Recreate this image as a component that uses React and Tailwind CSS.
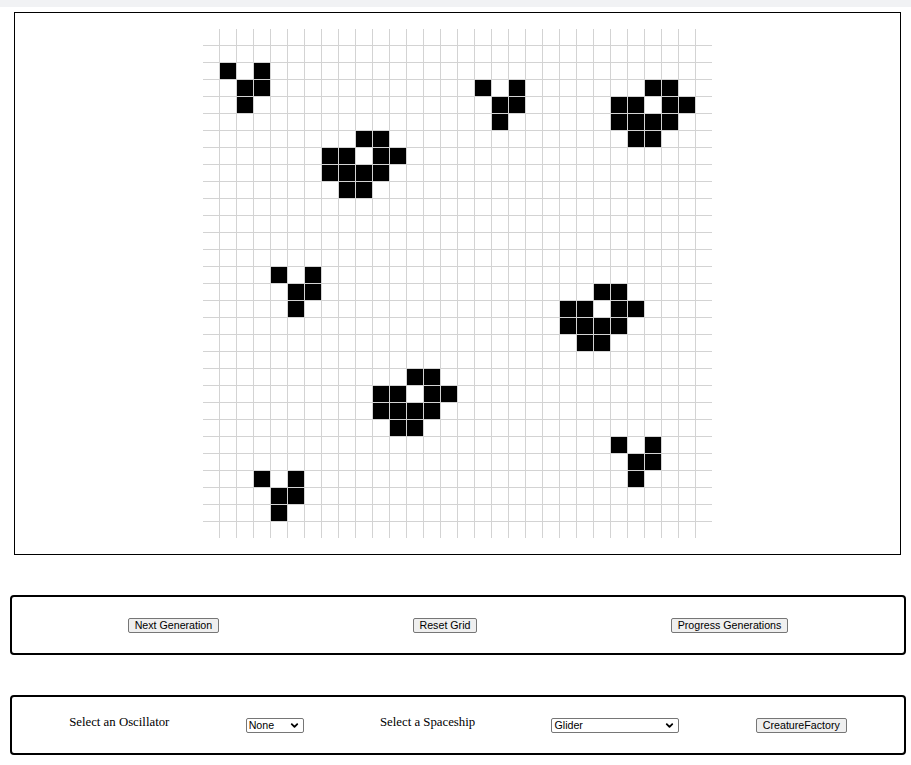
import { ChevronDown } from "lucide-react";

const ROWS = 30;
const COLS = 30;

// live cells as [row, col]
const glider = (r, c) => [
  [r, c],
  [r, c + 2],
  [r + 1, c + 1],
  [r + 1, c + 2],
  [r + 2, c + 1],
];

// the little 4-row blob (top row offset by 2 from its left edge)
const blob = (r, c) => [
  [r, c + 2],
  [r, c + 3],
  [r + 1, c],
  [r + 1, c + 1],
  [r + 1, c + 3],
  [r + 1, c + 4],
  [r + 2, c],
  [r + 2, c + 1],
  [r + 2, c + 2],
  [r + 2, c + 3],
  [r + 3, c + 1],
  [r + 3, c + 2],
];

const live = new Set(
  [
    ...glider(2, 1),
    ...glider(3, 16),
    ...blob(3, 24),
    ...blob(6, 7),
    ...glider(14, 4),
    ...blob(15, 21),
    ...blob(20, 10),
    ...glider(24, 24),
    ...glider(26, 3),
  ].map(([r, c]) => `${r}-${c}`)
);

const cells = [];
for (let r = 0; r < ROWS; r++) {
  for (let c = 0; c < COLS; c++) {
    cells.push({ key: `${r}-${c}`, alive: live.has(`${r}-${c}`) });
  }
}

function Btn({ children }) {
  return (
    <button className="h-[15px] flex items-center px-[6px] bg-[#efefef] border border-[#767676] rounded-[2px] text-black text-[10.67px] leading-[12px] font-['Liberation_Sans',Arial,sans-serif]">
      {children}
    </button>
  );
}

function Select({ value, options, width }) {
  return (
    <div className={`relative flex h-[15px] ${width}`}>
      <select
        defaultValue={value}
        className="appearance-none w-full h-[15px] pl-[2px] pr-[14px] py-0 bg-white border border-[#767676] rounded-[2px] text-black text-[10.67px] leading-[12px] font-['Liberation_Sans',Arial,sans-serif]"
      >
        {options.map((o) => (
          <option key={o}>{o}</option>
        ))}
      </select>
      <ChevronDown
        size={11}
        strokeWidth={4}
        className="absolute right-[4px] top-[2px] text-black pointer-events-none"
      />
    </div>
  );
}

export default function App() {
  return (
    <div className="min-h-screen bg-white font-['Liberation_Serif',serif]">
      <div className="h-[7px] bg-[#f1f2f4]" />

      <div className="mt-[5px] ml-[14px] w-[887px] border border-black flex justify-center py-[16px]">
        <div className="grid grid-cols-[repeat(30,16px)] grid-rows-[repeat(30,16px)] gap-px bg-[#d3d3d3]">
          {cells.map((cell) => (
            <div key={cell.key} className={cell.alive ? "bg-black" : "bg-white"} />
          ))}
        </div>
      </div>

      <div className="mt-[40px] ml-[10px] w-[896px] h-[60px] border-2 border-black rounded-[4px] flex items-center justify-around px-[19px]">
        <Btn>Next Generation</Btn>
        <Btn>Reset Grid</Btn>
        <Btn>Progress Generations</Btn>
      </div>

      <div className="mt-[40px] ml-[10px] w-[896px] h-[60px] border-2 border-black rounded-[4px] flex items-center justify-around px-[19px]">
        <span className="text-[12.8px] leading-[15px] text-black pb-[5px]">Select an Oscillator</span>
        <Select value="None" options={["None", "Blinker", "Toad", "Beacon", "Pulsar"]} width="w-[58px]" />
        <span className="text-[12.8px] leading-[15px] text-black pb-[5px]">Select a Spaceship</span>
        <Select value="Glider" options={["Glider", "Lightweight spaceship"]} width="w-[128px]" />
        <Btn>CreatureFactory</Btn>
      </div>
    </div>
  );
}
